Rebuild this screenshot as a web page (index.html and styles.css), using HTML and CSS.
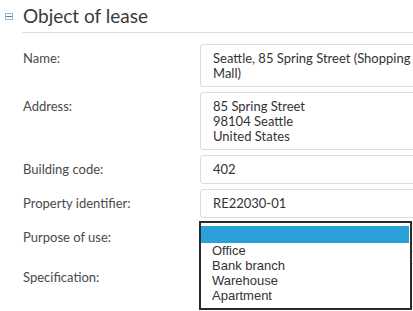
FILE: index.html
```html
<!DOCTYPE html>
<html lang="en">
<head>
  <meta charset="UTF-8">
  <title>Object of lease</title>
  <link rel="stylesheet" href="styles.css">
</head>
<body>
  <section class="panel">
    <header class="panel-head">
      <span class="toggle" aria-hidden="true"></span>
      <h2>Object of lease</h2>
    </header>
    <div class="form">
      <div class="row">
        <label>Name:</label>
        <div class="field">Seattle, 85 Spring Street (Shopping Mall)</div>
      </div>
      <div class="row">
        <label>Address:</label>
        <div class="field">85 Spring Street<br>98104 Seattle<br>United States</div>
      </div>
      <div class="row">
        <label>Building code:</label>
        <div class="field">402</div>
      </div>
      <div class="row">
        <label>Property identifier:</label>
        <div class="field">RE22030-01</div>
      </div>
      <div class="row purpose">
        <label>Purpose of use:</label>
        <div class="field select"></div>
        <ul class="options">
          <li class="selected">&nbsp;</li>
          <li>Office</li>
          <li>Bank branch</li>
          <li>Warehouse</li>
          <li>Apartment</li>
        </ul>
      </div>
      <div class="row">
        <label>Specification:</label>
        <div class="field area"></div>
      </div>
    </div>
  </section>
</body>
</html>
```

FILE: styles.css
```css
body {
  margin: 0;
  font-family: Lato, "Open Sans", sans-serif;
  color: #444;
  background: #fff;
  overflow: hidden;
}
.panel {
  padding: 4px 0 0 0;
}
.panel-head {
  display: flex;
  align-items: center;
  height: 24px;
}
.toggle {
  width: 6px;
  height: 5px;
  margin: 0 10px 0 5px;
  border: 1px solid #8fb6dc;
  background: linear-gradient(#fff 0, #fff 2px, #777 2px, #777 3px, #fff 3px);
}
.panel-head h2 {
  margin: 0;
  font-size: 19px;
  font-weight: 400;
  color: #3a3a3a;
  line-height: 24px;
  white-space: nowrap;
}
.form {
  margin: 4px 0 0 22px;
  border-top: 1px solid #ddd;
  padding-top: 11px;
  overflow: hidden;
}
.row {
  display: flex;
  margin-bottom: 5px;
  position: relative;
}
.row label {
  flex: 0 0 177px;
  padding: 7px 0 0 1px;
  font-size: 13px;
  line-height: 15px;
  color: #4a4a4a;
}
.field {
  flex: 0 0 240px;
  box-sizing: border-box;
  padding: 6px 12px 5px 12px;
  border: 1px solid #dcdcdc;
  border-radius: 3px;
  font-size: 13px;
  line-height: 15px;
  color: #333;
  min-height: 29px;
}
.field.select {
  height: 29px;
}
.field.area {
  height: 44px;
}
.purpose {
  margin-bottom: 11px;
}
.options {
  position: absolute;
  left: 177px;
  top: -2px;
  width: 209px;
  margin: 0;
  padding: 3px 0 5px 0;
  list-style: none;
  background: #fff;
  border: 2px solid #2b2b2b;
  z-index: 5;
  font-family: "Liberation Sans", Arial, sans-serif;
  font-size: 13px;
  line-height: 15px;
  color: #333;
}
.options li {
  padding-left: 11px;
}
.options li.selected {
  background: #2a9fd8;
  height: 17px;
  margin-right: 1px;
}
```
